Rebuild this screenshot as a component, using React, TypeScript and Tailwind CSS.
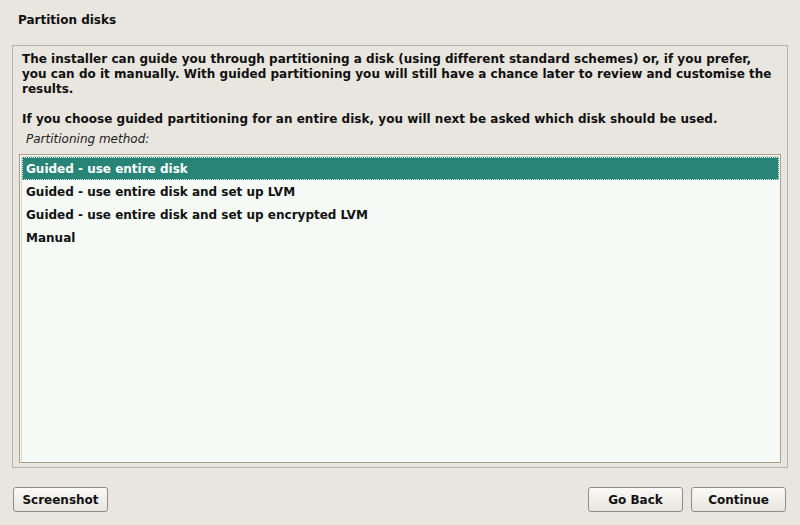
import React from "react";

const font = { fontFamily: '"DejaVu Sans", sans-serif' };

function Btn({ label, className = "" }: { label: string; className?: string }) {
  return (
    <button
      className={`h-[25px] w-[95px] rounded-[3px] border border-[#918d82] bg-gradient-to-b from-[#fbfaf8] to-[#e6e4dd] text-[12px] font-bold text-[#111] leading-none ${className}`}
      style={font}
    >
      {label}
    </button>
  );
}

export default function App() {
  const items = [
    "Guided - use entire disk",
    "Guided - use entire disk and set up LVM",
    "Guided - use entire disk and set up encrypted LVM",
    "Manual",
  ];
  return (
    <div
      className="w-[800px] h-[525px] bg-[#e8e6df] text-[#101010] flex flex-col overflow-hidden"
      style={font}
    >
      <div className="h-[45px] pl-[18px] pt-[13px] text-[12px] font-bold leading-[15px]">Partition disks</div>
      <div className="mx-[12px] h-[423px] border border-[#b7b5ab] flex flex-col px-[6px] pt-[6px] pb-[4px]">
        <div className="pl-[3px] pr-[5px] text-[12px] font-bold leading-[15px] tracking-[0.02px]">
          <p>
            The installer can guide you through partitioning a disk (using different standard schemes) or, if you prefer,
            you can do it manually. With guided partitioning you will still have a chance later to review and customise the
            results.
          </p>
          <p className="mt-[15px]">
            If you choose guided partitioning for an entire disk, you will next be asked which disk should be used.
          </p>
        </div>
        <div className="pl-[7px] mt-[5px] text-[12px] italic leading-[15px] text-[#222]">Partitioning method:</div>
        <div className="mt-[7px] flex-1 border border-[#a99f8d] bg-[#f6fbf8] p-[1px]">
          <div className="border-t border-l border-[#d9d6cc] h-full">
            {items.map((t, i) => (
              <div
                key={t}
                className={`h-[23px] flex items-center pl-[3px] text-[12px] font-bold border ${
                  i === 0
                    ? "bg-[#288476] text-white border-dotted border-[#e8f4f0]"
                    : "text-[#111] border-transparent"
                }`}
              >
                {t}
              </div>
            ))}
          </div>
        </div>
      </div>
      <div className="flex items-start px-[13px] pt-[19px]">
        <Btn label="Screenshot" />
        <div className="flex-1" />
        <Btn label="Go Back" className="mr-[8px]" />
        <Btn label="Continue" className="mr-[1px]" />
      </div>
    </div>
  );
}
